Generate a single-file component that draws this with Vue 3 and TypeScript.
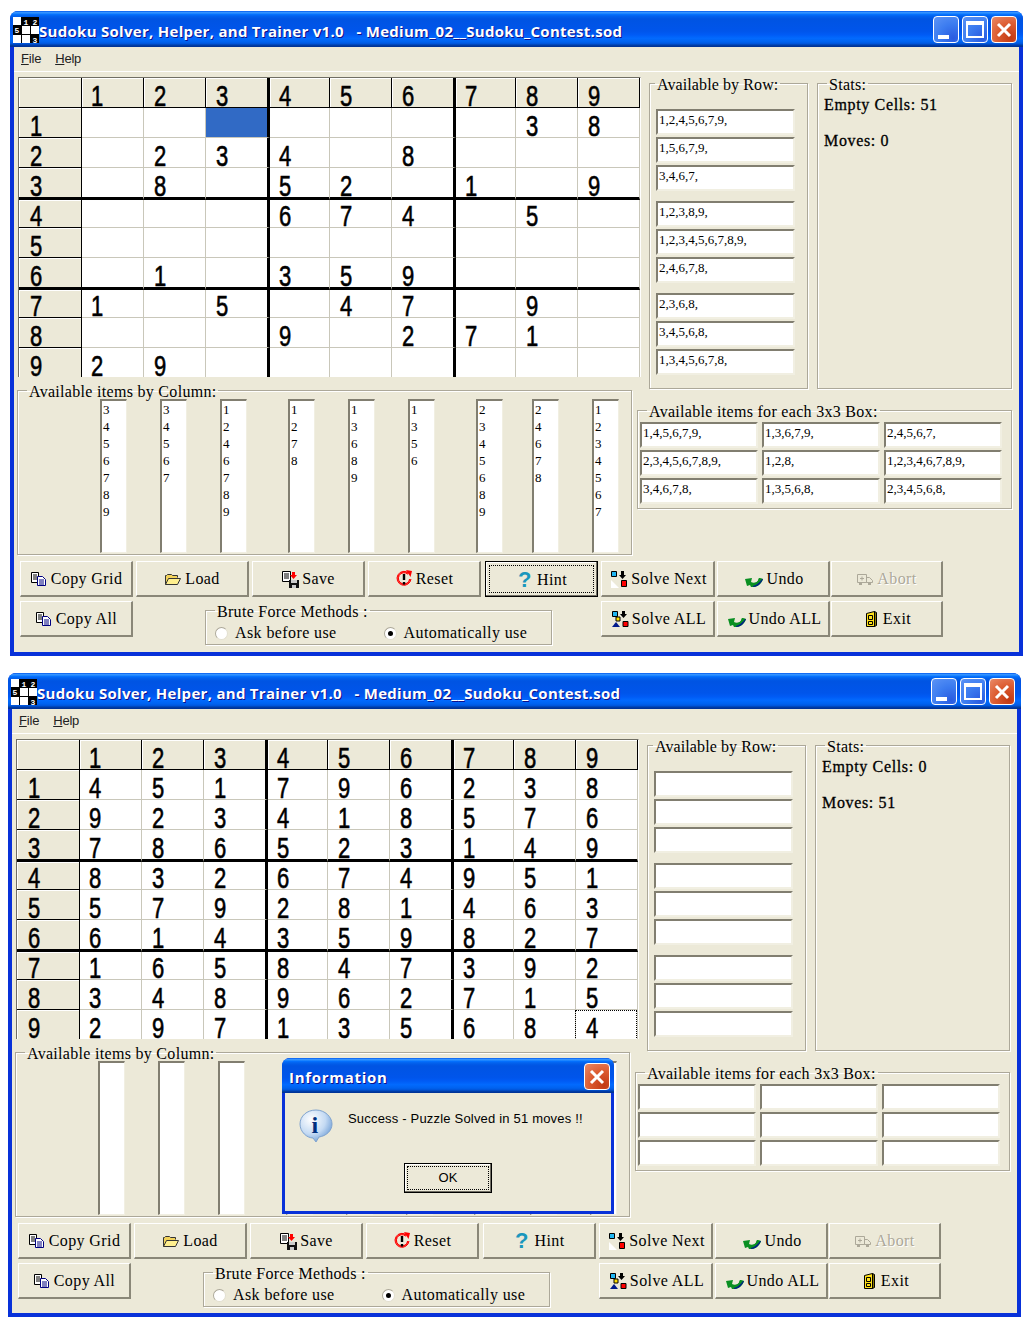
<template>
	<div class="desktop">
		<section v-for="win in windows" :key="win.id" class="window" :class="win.id">
			<header class="titlebar">
				<svg class="app-icon" width="26" height="26" viewBox="0 0 26 26" shape-rendering="crispEdges">
					<rect width="26" height="26" fill="#fff" />
					<path d="M8 0v26M17 0v26M0 8h26M0 17h26" stroke="#000" stroke-width="1" fill="none" />
					<rect x="9" y="0" width="8" height="8" fill="#000" />
					<rect x="18" y="0" width="8" height="8" fill="#000" />
					<rect x="0" y="9" width="8" height="8" fill="#000" />
					<rect x="18" y="18" width="8" height="8" fill="#000" />
					<text x="13" y="7.5" class="app-digit">1</text>
					<text x="22" y="7.5" class="app-digit">2</text>
					<text x="4" y="16" class="app-digit">5</text>
					<text x="22" y="25.5" class="app-digit">3</text>
				</svg>
				<span class="title-text">{{ appTitle }}</span>
				<div class="title-buttons">
					<span class="tb tb-min"><i></i></span>
					<span class="tb tb-max"><i></i></span>
					<span class="tb tb-close">
						<svg width="18" height="18" viewBox="0 0 18 18"><path d="M3 3l12 12M15 3L3 15" stroke="#fff" stroke-width="3" fill="none" /></svg>
					</span>
				</div>
			</header>

			<div class="client">
				<nav class="menu"><span><u>F</u>ile</span><span><u>H</u>elp</span></nav>

				<div class="main">
					<div class="left">
						<div class="sudoku">
							<template v-for="(row, r) in win.board" :key="r">
								<div v-for="(val, c) in row" :key="c" class="cell" :class="cellClass(win, r, c)"><span class="digit">{{ val }}</span></div>
							</template>
						</div>
						<fieldset class="group col-group">
							<legend>Available items by Column:</legend>
							<div v-for="(col, i) in win.cols" :key="i" class="col-box">
								<div v-for="d in col" :key="d">{{ d }}</div>
							</div>
						</fieldset>
					</div>

					<div class="right">
						<div class="right-top">
							<fieldset class="group row-group">
								<legend>Available by Row:</legend>
								<div v-for="(text, i) in win.rows" :key="i" class="field">{{ text }}</div>
							</fieldset>
							<fieldset class="group stats">
								<legend>Stats:</legend>
								<p>Empty Cells: {{ win.empty }}</p>
								<p>Moves: {{ win.moves }}</p>
							</fieldset>
						</div>
						<fieldset class="group box-group">
							<legend>Available items for each 3x3 Box:</legend>
							<div v-for="(text, i) in win.boxes" :key="i" class="field">{{ text }}</div>
						</fieldset>
					</div>
				</div>

				<div class="btn-row">
					<button v-for="b in rowOne" :key="b.label" type="button" class="btn" :class="[b.cls, { focused: win.hintFocus && b.label === 'Hint', disabled: b.disabled }]">
						<span v-if="win.hintFocus && b.label === 'Hint'" class="focus-ring"></span>
						<svg class="ico" width="18" height="18" viewBox="0 0 18 18">
							<path v-for="(s, i) in icons[b.icon]" :key="i" :d="s.d" :fill="s.fill || 'none'" :stroke="s.stroke || 'none'" />
							<text v-if="b.icon === 'hint'" x="9" y="16" class="hint-mark">?</text>
						</svg>
						{{ b.label }}
					</button>
				</div>
				<div class="btn-row second">
					<button type="button" class="btn">
						<svg class="ico" width="18" height="18" viewBox="0 0 18 18">
							<path v-for="(s, i) in icons.copy" :key="i" :d="s.d" :fill="s.fill || 'none'" :stroke="s.stroke || 'none'" />
						</svg>
						Copy All
					</button>
					<fieldset class="group brute">
						<legend>Brute Force Methods :</legend>
						<label class="radio"><span class="dot"></span>Ask before use</label>
						<label class="radio auto"><span class="dot on"></span>Automatically use</label>
					</fieldset>
					<button v-for="b in rowTwo" :key="b.label" type="button" class="btn" :class="b.cls">
						<svg class="ico" width="18" height="18" viewBox="0 0 18 18">
							<path v-for="(s, i) in icons[b.icon]" :key="i" :d="s.d" :fill="s.fill || 'none'" :stroke="s.stroke || 'none'" />
						</svg>
						{{ b.label }}
					</button>
				</div>
			</div>

			<div v-if="win.solved" class="dialog">
				<header class="dialog-title">
					<span>Information</span>
					<span class="tb tb-close">
						<svg width="18" height="18" viewBox="0 0 18 18"><path d="M3 3l12 12M15 3L3 15" stroke="#fff" stroke-width="3" fill="none" /></svg>
					</span>
				</header>
				<div class="dialog-body">
					<div class="dialog-msg">
						<svg width="34" height="34" viewBox="0 0 34 34">
							<defs>
								<radialGradient id="bubble" cx="35%" cy="30%" r="75%">
									<stop offset="0" stop-color="#fff" />
									<stop offset="0.6" stop-color="#c4daf3" />
									<stop offset="1" stop-color="#6f9ed6" />
								</radialGradient>
							</defs>
							<path d="M17 1C8 1 1 7 1 15s7 14 13 14l3 4 3-5c7-1 13-6 13-13S26 1 17 1z" fill="url(#bubble)" stroke="#7fa3cf" />
							<text x="16" y="24" class="info-mark">i</text>
						</svg>
						<span>Success - Puzzle Solved in 51 moves !!</span>
					</div>
					<button type="button" class="ok-btn"><span>OK</span></button>
				</div>
			</div>
		</section>
	</div>
</template>

<script setup lang="ts">
interface Shape {
	d: string;
	fill?: string;
	stroke?: string;
}

interface Btn {
	label: string;
	icon: string;
	cls?: string;
	disabled?: boolean;
}

const appTitle = "Sudoku Solver, Helper, and Trainer v1.0   - Medium_02__Sudoku_Contest.sod";

const puzzle = [
	".......38",
	".234.8...",
	".8.52.1.9",
	"...674.5.",
	".........",
	".1.359...",
	"1.5.47.9.",
	"...9.271.",
	"29.......",
];

const solution = [
	"451796238",
	"923418576",
	"786523149",
	"832674951",
	"579281463",
	"614359827",
	"165847392",
	"348962715",
	"297135684",
];

function toBoard(lines: string[]): string[][] {
	const head = ["", "1", "2", "3", "4", "5", "6", "7", "8", "9"];
	const body = lines.map((line, i) => [String(i + 1), ...line.split("").map((ch) => (ch === "." ? "" : ch))]);
	return [head, ...body];
}

const windows = [
	{
		id: "first",
		solved: false,
		hintFocus: true,
		selected: [1, 3],
		focusCell: null as number[] | null,
		board: toBoard(puzzle),
		empty: 51,
		moves: 0,
		rows: ["1,2,4,5,6,7,9,", "1,5,6,7,9,", "3,4,6,7,", "1,2,3,8,9,", "1,2,3,4,5,6,7,8,9,", "2,4,6,7,8,", "2,3,6,8,", "3,4,5,6,8,", "1,3,4,5,6,7,8,"],
		cols: ["3456789", "34567", "1246789", "1278", "13689", "1356", "2345689", "24678", "1234567"],
		boxes: ["1,4,5,6,7,9,", "1,3,6,7,9,", "2,4,5,6,7,", "2,3,4,5,6,7,8,9,", "1,2,8,", "1,2,3,4,6,7,8,9,", "3,4,6,7,8,", "1,3,5,6,8,", "2,3,4,5,6,8,"],
	},
	{
		id: "second",
		solved: true,
		hintFocus: false,
		selected: null as number[] | null,
		focusCell: [9, 9],
		board: toBoard(solution),
		empty: 0,
		moves: 51,
		rows: ["", "", "", "", "", "", "", "", ""],
		cols: ["", "", "", "", "", "", "", "", ""],
		boxes: ["", "", "", "", "", "", "", "", ""],
	},
];

function cellClass(win: (typeof windows)[number], r: number, c: number) {
	return {
		head: r === 0 || c === 0,
		"row-head": c === 0,
		"box-start": c === 1 || c === 4 || c === 7,
		"edge-col": c === 3 || c === 6,
		"edge-row": r === 3 || r === 6,
		"last-row": r === 9,
		selected: win.selected?.[0] === r && win.selected?.[1] === c,
		"cell-focus": win.focusCell?.[0] === r && win.focusCell?.[1] === c,
	};
}

const rowOne: Btn[] = [
	{label: "Copy Grid", icon: "copy"},
	{label: "Load", icon: "load"},
	{label: "Save", icon: "save"},
	{label: "Reset", icon: "reset"},
	{label: "Hint", icon: "hint", cls: "hint-btn"},
	{label: "Solve Next", icon: "next", cls: "wide"},
	{label: "Undo", icon: "undo", cls: "join"},
	{label: "Abort", icon: "abort", cls: "join-last", disabled: true},
];

const rowTwo: Btn[] = [
	{label: "Solve ALL", icon: "all", cls: "wide"},
	{label: "Undo ALL", icon: "undo", cls: "join"},
	{label: "Exit", icon: "exit", cls: "join-last"},
];

const icons: Record<string, Shape[]> = {
	copy: [
		{d: "M1.5 2.5h7v10h-7z", fill: "#fff", stroke: "#000"},
		{d: "M3 5h4M3 7h4M3 9h4", stroke: "#000"},
		{d: "M7.5 6.5h5l3 3v6h-8z", fill: "#fff", stroke: "#000080"},
		{d: "M9 10h5M9 12h5M9 14h5", stroke: "#000080"},
	],
	load: [
		{d: "M1.5 14.5v-9h1l1-1h4l1 1h5v2", fill: "#f2d25a", stroke: "#333"},
		{d: "M1.5 14.5l3-6h12l-3 6z", fill: "#ffef8e", stroke: "#333"},
	],
	save: [
		{d: "M1.5 1.5h8v10h-8z", fill: "#fff", stroke: "#000"},
		{d: "M3 4h5M3 6h5M3 8h5", stroke: "#000"},
		{d: "M11 2h3v3h2l-3.5 4L9 5h2z", fill: "#f00"},
		{d: "M8 10h10v8H8z", fill: "#111"},
		{d: "M10 10h6v3h-6zM11 15h4v3h-4z", fill: "#ccc"},
	],
	reset: [
		{d: "M13.6 3A7 7 0 1 0 16 9M13.2 3.6A6.2 6.2 0 1 0 15.2 9M12.8 4.2A5.6 5.6 0 1 0 14.6 9", stroke: "#f00"},
		{d: "M11 0l6 1-1.5 6z", fill: "#f00"},
		{d: "M7.8 4h2.4v6H7.8zM7.8 12h2.4v2.4H7.8z", fill: "#000"},
	],
	hint: [],
	next: [
		{d: "M1 10l8 8H1z", fill: "#fff"},
		{d: "M1.5 1.5h5v5h-5z", fill: "#1fb5f2", stroke: "#000"},
		{d: "M11 1h3v4h2l-3.5 4L9 5h2z", fill: "#000"},
		{d: "M11.5 10.5h5v6h-5z", fill: "#f00", stroke: "#000"},
	],
	all: [
		{d: "M1.5 1.5h5v5h-5z", fill: "#1fb5f2", stroke: "#000"},
		{d: "M11 1h3v3h2l-3.5 4L9 4h2z", fill: "#000"},
		{d: "M12 11.5h5v5h-5z", fill: "#f00", stroke: "#000"},
		{d: "M1 17l4-5 4 5z", fill: "#001a8c"},
		{d: "M5 7h4v4H5z", fill: "#ffe000", stroke: "#000"},
	],
	undo: [
		{d: "M0 9l7-1-1 4c2 1 5 1 7-1l1-3 4 1c-1 4-5 8-9 8H6l-1-2-3 1z", fill: "#0a8f22"},
		{d: "M7 17c4 0 8-3 11-8l-4-1c-1 3-2 5-7 6z", fill: "#0a8f22"},
		{d: "M8 17c4 0 8-3 10-8l-1 0c-2 3-5 6-9 7z", fill: "#001a8c"},
	],
	abort: [
		{d: "M1.5 4.5h9v8h-9zM10.5 7.5h3l3 3v2h-6z", fill: "#ece9d8", stroke: "#aca899"},
		{d: "M4 8.5h4M6 6.5v4", stroke: "#aca899"},
		{d: "M3 13h3v2H3zM12 13h3v2h-3z", fill: "#aca899"},
	],
	exit: [
		{d: "M4.5 3.5l8-2v15h-8z", fill: "#ffe11a", stroke: "#000"},
		{d: "M12.5 1.5l2 1v13l-2 1z", fill: "#8a7a00", stroke: "#000"},
		{d: "M6.5 5.5h4v4h-4zM6.5 11.5h4v3h-4z", fill: "#ffe11a", stroke: "#000"},
	],
};
</script>

<style>
html,
body {
	margin: 0;
	background: #fff;
}
</style>

<style scoped>
.desktop {
	width: 1028px;
	height: 1322px;
	padding-top: 11px;
	box-sizing: border-box;
	overflow: hidden;
	font-family: "Liberation Serif", serif;
	color: #000;
}

.window {
	position: relative;
	width: 1013px;
	height: 645px;
	box-sizing: border-box;
	margin-left: 10px;
	border-radius: 8px 8px 0 0;
	background: #0831d9;
	display: flex;
	flex-direction: column;
}

.window.second {
	margin-left: 8px;
	margin-top: 17px;
	height: 644px;
}

.titlebar {
	flex: none;
	height: 36px;
	display: flex;
	align-items: center;
	padding: 1px 6px 0 3px;
	box-sizing: border-box;
	border-radius: 8px 8px 0 0;
	background: linear-gradient(180deg, #0058ee 0%, #3593ff 4%, #288eff 6%, #127dff 8%, #036ffc 10%, #0262ee 14%, #0057e5 20%, #0054e3 24%, #0055eb 56%, #005bf5 66%, #026afe 76%, #0062ef 86%, #0052d6 92%, #0040ab 94%, #003092 100%);
}

.app-icon {
	flex: none;
}

.app-digit {
	font: bold 8px "Liberation Mono", monospace;
	fill: #fff;
	text-anchor: middle;
}

.title-text {
	margin: 2px 0 0;
	font: bold 15px "Open Sans", sans-serif;
	letter-spacing: 0.29px;
	white-space: pre;
	color: #fff;
	text-shadow: 1px 1px #0f1089;
}

.title-buttons {
	margin-left: auto;
	display: flex;
	gap: 3px;
}

.tb {
	width: 26px;
	height: 27px;
	box-sizing: border-box;
	border: 1px solid #fff;
	border-radius: 4px;
	display: flex;
	position: relative;
	background: radial-gradient(circle at 80% 85%, #2a5be0 0%, #3c7cf0 50%, #5d94f5 100%);
}

.tb-min i {
	position: absolute;
	left: 4px;
	bottom: 3px;
	width: 11px;
	height: 4px;
	background: #fff;
}

.tb-max i {
	position: absolute;
	left: 3px;
	top: 4px;
	width: 18px;
	height: 17px;
	box-sizing: border-box;
	border: 2px solid #fff;
	border-top-width: 4px;
}

.tb-close {
	align-items: center;
	justify-content: center;
	background: radial-gradient(circle at 80% 85%, #c23a14 0%, #dc5b30 50%, #e98a68 100%);
}

.client {
	flex: 1;
	margin: 0 4px 4px;
	background: #ece9d8;
	min-height: 0;
}

.menu {
	height: 25px;
	box-sizing: border-box;
	border-bottom: 1px solid #fff;
	padding: 3px 0 0 7px;
	display: flex;
	gap: 14px;
	font: 13px/17px "Liberation Sans", sans-serif;
	letter-spacing: -0.2px;
	color: #222;
}

.main {
	display: flex;
	padding-top: 3px;
	height: 486px;
	box-sizing: border-box;
}

.left {
	flex: none;
	width: 620px;
	margin-left: 3px;
}

.sudoku {
	width: 623px;
	height: 300px;
	margin: 2px 0 0 1px;
	box-sizing: border-box;
	border-top: 1px solid #716f64;
	border-left: 1px solid #716f64;
	border-right: 1px solid #fff;
	overflow: hidden;
	background: #fff;
	display: grid;
	grid-template-columns: 63px 62px 62px 64px 60px 62px 64px 60px 62px 62px;
	grid-template-rows: 30px 30px 30px 32px 28px 30px 32px 28px 30px 29px;
}

.cell {
	position: relative;
	box-sizing: border-box;
	border-right: 1px solid #c9c7ba;
	border-bottom: 1px solid #c9c7ba;
	padding-left: 8px;
	display: flex;
	align-items: flex-end;
	background: #fff;
	font: 29px/22px "Liberation Sans", sans-serif;
	-webkit-text-stroke: 0.6px #000;
}

.digit {
	display: inline-block;
	transform: scaleX(0.76);
}

.cell.head {
	background: #ece9d8;
	border-right-color: #000;
	border-bottom-color: #000;
	box-shadow: inset 1px 1px 0 #fff;
}

.cell.box-start {
	padding-left: 7px;
}

.cell.row-head {
	padding-left: 9px;
}

.cell.edge-col {
	border-right: 3px solid #000;
}

.cell.edge-row {
	border-bottom: 3px solid #000;
}

.cell.last-row {
	border-bottom: 0;
}

.cell.selected {
	background: #316ac5;
}

.cell-focus::after {
	content: "";
	position: absolute;
	inset: 0 0 -1px -1px;
	border: 1px dotted #000;
}

.group {
	margin: 0;
	padding: 0;
	box-sizing: border-box;
	min-width: 0;
	border: 1px solid #aca899;
	box-shadow: inset 1px 1px 0 #fff, 1px 1px 0 #fff;
}

.group legend {
	margin-left: 9px;
	padding: 0 2px;
	height: 16px;
	font-size: 16px;
	line-height: 20px;
	letter-spacing: 0.3px;
	white-space: nowrap;
}

.col-group {
	width: 615px;
	height: 173px;
	margin-top: 5px;
	padding: 1px 0 0 82px;
	display: flex;
	align-items: flex-start;
}

.col-group legend {
	margin-left: -73px;
}

.col-box {
	flex: none;
	width: 27px;
	height: 154px;
	box-sizing: border-box;
	padding: 0 0 0 1px;
	background: #fff;
	border-style: solid;
	border-width: 2px 1px 1px 2px;
	border-color: #817e70 #f1efe2 #f1efe2 #817e70;
	font-size: 13px;
	line-height: 17px;
	margin-left: 33px;
}

.col-box:first-of-type {
	margin-left: 0;
}

.col-box:nth-of-type(4),
.col-box:nth-of-type(7) {
	margin-left: 41px;
}

.col-box:nth-of-type(8) {
	margin-left: 29px;
}

.right {
	flex: none;
	width: 375px;
}

.right-top {
	display: flex;
	height: 314px;
}

.row-group {
	flex: none;
	width: 159px;
	height: 314px;
	margin-left: 12px;
	padding: 18px 12px 0 6px;
	display: flex;
	flex-direction: column;
	gap: 2px;
}

.row-group legend {
	margin-left: -1px;
	letter-spacing: 0.1px;
}

.row-group .field:nth-of-type(4),
.row-group .field:nth-of-type(7) {
	margin-top: 8px;
}

.field {
	height: 26px;
	box-sizing: border-box;
	padding: 0 0 0 1px;
	background: #fff;
	border-style: solid;
	border-width: 2px;
	border-color: #817e70 #f1efe2 #f1efe2 #817e70;
	font-size: 13px;
	line-height: 17px;
	white-space: nowrap;
}

.stats {
	flex: none;
	width: 195px;
	height: 314px;
	margin-left: 9px;
	padding: 4px 0 0 6px;
}

.stats legend {
	margin-left: 3px;
}

.stats p {
	margin: 0;
	font-size: 16px;
	line-height: 20px;
	letter-spacing: 0.65px;
	-webkit-text-stroke: 0.3px #000;
}

.stats p + p {
	margin-top: 16px;
}

.box-group {
	width: 375px;
	height: 107px;
	margin-top: 13px;
	padding: 4px 0 0 2px;
	display: grid;
	grid-template-columns: repeat(3, 118px);
	grid-auto-rows: 26px;
	column-gap: 4px;
	row-gap: 2px;
	align-content: start;
}

.box-group legend {
	margin-left: 7px;
}

.btn-row {
	display: flex;
	gap: 3px;
	margin: 3px 0 0 6px;
	height: 36px;
}

.btn-row.second {
	margin-top: 4px;
}

.btn {
	position: relative;
	flex: none;
	width: 113px;
	height: 36px;
	padding: 1px 0 0;
	box-sizing: border-box;
	display: flex;
	align-items: center;
	justify-content: center;
	gap: 3px;
	background: #ece9d8;
	border-style: solid;
	border-width: 1px 2px 2px 1px;
	border-color: #fff #8a8778 #8a8778 #fff;
	font: 16px "Liberation Serif", serif;
	letter-spacing: 0.4px;
	color: #000;
}

.btn.hint-btn {
	margin-left: 1px;
}

.btn.wide {
	width: 114px;
	padding-left: 2px;
}

.btn.join {
	margin-left: -1px;
	padding-left: 3px;
}

.btn.join-last {
	margin-left: -2px;
	width: 112px;
}

.btn.focused {
	border: 1px solid #000;
	box-shadow: inset -1px -1px 0 #716f64, inset 1px 1px 0 #fff;
}

.focus-ring {
	position: absolute;
	inset: 3px;
	border: 1px dotted #000;
}

.btn.disabled {
	color: #aca899;
	text-shadow: 1px 1px 0 #fff;
}

.ico {
	flex: none;
}

.hint-mark {
	font: bold 22px "Liberation Sans", sans-serif;
	fill: #1b97bd;
	text-anchor: middle;
}

.brute {
	flex: none;
	width: 347px;
	height: 43px;
	margin: 1px 46px 0 69px;
	position: relative;
	padding: 4px 0 0 9px;
	display: flex;
}

.brute legend {
	margin-left: 0;
}

.radio {
	display: flex;
	align-items: center;
	gap: 7px;
	font-size: 16px;
	line-height: 18px;
	letter-spacing: 0.4px;
}

.radio.auto {
	margin-left: 47px;
}

.dot {
	position: relative;
	width: 13px;
	height: 13px;
	box-sizing: border-box;
	border-radius: 50%;
	background: #fff;
	border: 1px solid #aca899;
	border-bottom-color: #e2dfd0;
	border-right-color: #e2dfd0;
}

.dot.on::after {
	content: "";
	position: absolute;
	left: 3px;
	top: 3px;
	width: 5px;
	height: 5px;
	border-radius: 50%;
	background: #000;
}

.dialog {
	position: absolute;
	left: 274px;
	top: 385px;
	width: 332px;
	height: 156px;
	box-sizing: border-box;
	border-radius: 8px 8px 0 0;
	background: #0831d9;
	padding: 0 3px 3px;
	display: flex;
	flex-direction: column;
}

.dialog-title {
	flex: none;
	height: 35px;
	margin: 0 -3px;
	padding: 2px 4px 0 7px;
	box-sizing: border-box;
	border-radius: 8px 8px 0 0;
	display: flex;
	align-items: center;
	justify-content: space-between;
	background: linear-gradient(180deg, #0058ee 0%, #3593ff 4%, #288eff 6%, #127dff 8%, #036ffc 10%, #0262ee 14%, #0057e5 20%, #0054e3 24%, #0055eb 56%, #005bf5 66%, #026afe 76%, #0062ef 86%, #0052d6 92%, #0040ab 94%, #003092 100%);
	font: bold 15px "Open Sans", sans-serif;
	letter-spacing: 0.7px;
	color: #fff;
	text-shadow: 1px 1px #0f1089;
}

.dialog-body {
	flex: 1;
	background: #ece9d8;
	padding: 16px 0 0 14px;
	font: 13px "Liberation Sans", sans-serif;
	letter-spacing: 0.19px;
}

.dialog-msg {
	display: flex;
	align-items: flex-start;
	gap: 15px;
	height: 54px;
	line-height: 17px;
}

.dialog-msg span {
	margin-top: 1px;
}

.info-mark {
	font: bold 24px "Liberation Serif", serif;
	fill: #00307f;
	text-anchor: middle;
}

.ok-btn {
	display: block;
	width: 88px;
	height: 30px;
	margin-left: 105px;
	padding: 0;
	box-sizing: border-box;
	background: #ece9d8;
	border: 1px solid #000;
	box-shadow: inset -1px -1px 0 #716f64, inset 1px 1px 0 #fff;
	font: 13px "Liberation Sans", sans-serif;
	color: #000;
}

.ok-btn span {
	display: block;
	margin: 2px;
	line-height: 22px;
	border: 1px dotted #000;
}
</style>
